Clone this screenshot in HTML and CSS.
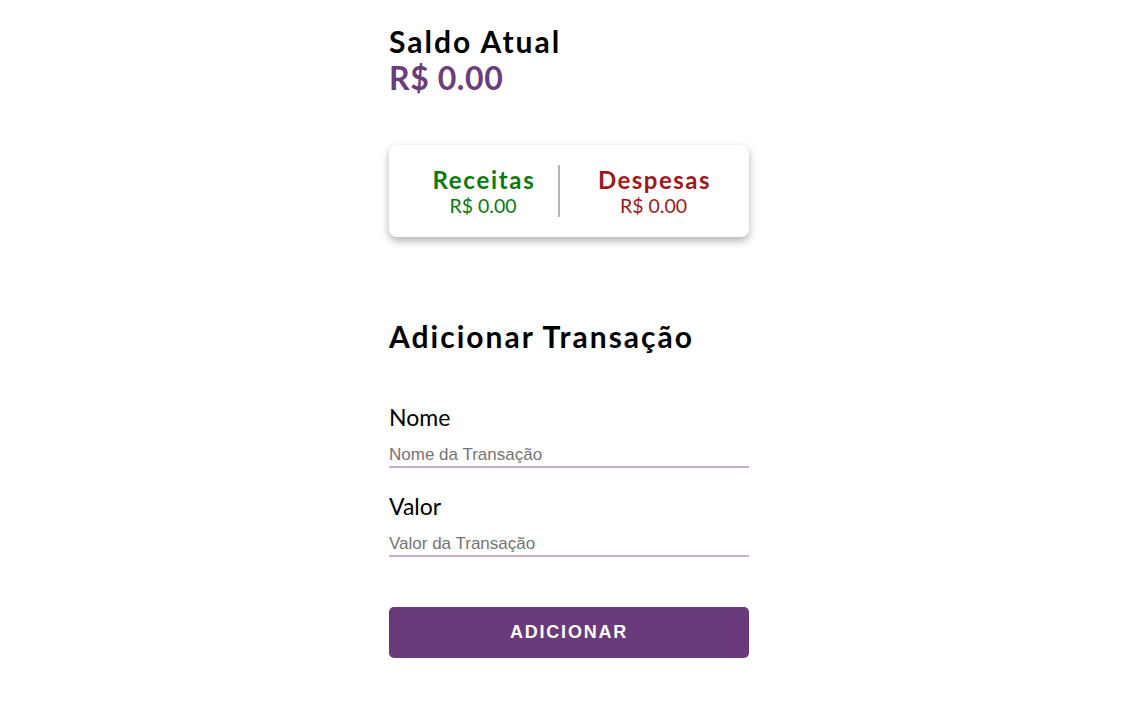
FILE: index.html
```html
<!DOCTYPE html>
<html lang="pt-BR">
<head>
<meta charset="utf-8">
<title>Saldo</title>
<link rel="stylesheet" href="styles.css">
</head>
<body>
<main class="app">
  <section class="balance">
    <h1 class="balance-title">Saldo Atual</h1>
    <div class="balance-value">R$ 0.00</div>
  </section>

  <section class="summary">
    <div class="summary-col income">
      <h2 class="summary-title">Receitas</h2>
      <div class="summary-value">R$ 0.00</div>
    </div>
    <div class="summary-divider"></div>
    <div class="summary-col expense">
      <h2 class="summary-title">Despesas</h2>
      <div class="summary-value">R$ 0.00</div>
    </div>
  </section>

  <section class="add">
    <h2 class="add-title">Adicionar Transação</h2>
    <form class="form">
      <div class="field">
        <label class="field-label" for="nome">Nome</label>
        <input class="field-input" id="nome" type="text" placeholder="Nome da Transação">
      </div>
      <div class="field">
        <label class="field-label" for="valor">Valor</label>
        <input class="field-input" id="valor" type="text" placeholder="Valor da Transação">
      </div>
      <button class="btn" type="button">ADICIONAR</button>
    </form>
  </section>
</main>
</body>
</html>
```

FILE: styles.css
```css
* { box-sizing: border-box; }
html, body { background: #fff; }
body {
  margin: 0 0 0 16px;
  font-family: Lato, "Open Sans", sans-serif;
  color: #000;
}
.app {
  width: 360px;
  margin: 0 auto;
  padding-top: 23px;
}
.balance-title {
  margin: 0;
  font-size: 30px;
  font-weight: 700;
  letter-spacing: 2px;
  line-height: 36px;
}
.balance-value {
  font-size: 32px;
  font-weight: 700;
  letter-spacing: 0.6px;
  color: #6b3d7d;
  line-height: 36px;
  margin-top: 1px;
}
.summary {
  margin-top: 49px;
  height: 92px;
  background: #fff;
  border-radius: 8px;
  box-shadow: 0 4px 8px rgba(0,0,0,0.3);
  display: flex;
  align-items: center;
  padding-left: 19px;
}
.summary-col {
  text-align: center;
}
.income { width: 150px; color: #0b7a0b; }
.expense { flex: 1; color: #9c1a1a; padding-right: 2px; }
.summary-title {
  margin: 0 -2px 0 0;
  font-size: 24px;
  font-weight: 700;
  letter-spacing: 1.7px;
  line-height: 28px;
}
.expense .summary-title { letter-spacing: 1.5px; }
.summary-value {
  font-size: 19.5px;
  line-height: 22px;
  margin-top: 1px;
}
.summary-divider {
  width: 2px;
  height: 52px;
  background: #b5b5b5;
}
.add { margin-top: 81px; }
.add-title {
  margin: 0 0 50px;
  font-size: 30px;
  font-weight: 700;
  letter-spacing: 2px;
  line-height: 36px;
}
.form { display: flex; flex-direction: column; }
.field { display: flex; flex-direction: column; margin-bottom: 25px; }
.field-label {
  font-size: 23px;
  line-height: 26px;
  margin-bottom: 14px;
}
.field-input {
  border: none;
  border-bottom: 2px solid #c9adcf;
  padding: 0;
  height: 24px;
  font-family: Arial, "Liberation Sans", sans-serif;
  font-size: 17px;
  outline: none;
  background: transparent;
}
.field-input::placeholder { color: #757575; }
.btn {
  margin-top: 25px;
  height: 51px;
  border: none;
  border-radius: 5px;
  background: #6b3a7b;
  color: #fff;
  font-family: Arial, "Liberation Sans", sans-serif;
  font-weight: 700;
  font-size: 18px;
  letter-spacing: 1.8px;
  cursor: pointer;
}
```
